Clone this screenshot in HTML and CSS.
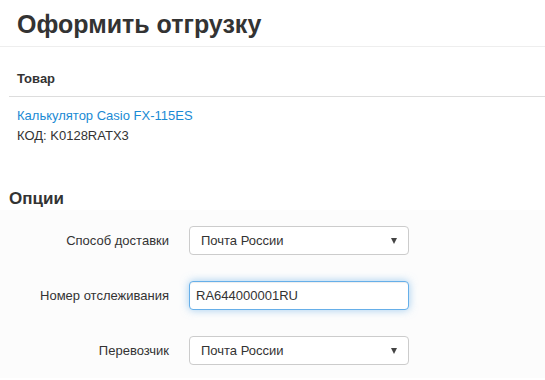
FILE: index.html
```html
<!DOCTYPE html>
<html lang="ru">
<head>
<meta charset="utf-8">
<link rel="stylesheet" href="styles.css">
</head>
<body>
<div class="page-header">
  <h1 class="title">Оформить отгрузку</h1>
</div>
<div class="product">
  <div class="product-head">Товар</div>
  <div class="product-body">
    <a class="product-link" href="#">Калькулятор Casio FX-115ES</a>
    <div class="product-code">КОД: K0128RATX3</div>
  </div>
</div>
<h2 class="section-title">Опции</h2>
<form class="options">
  <div class="row">
    <label class="row-label">Способ доставки</label>
    <div class="control select"><span>Почта России</span><span class="caret"></span></div>
  </div>
  <div class="row">
    <label class="row-label">Номер отслеживания</label>
    <div class="control input focus">RA644000001RU</div>
  </div>
  <div class="row">
    <label class="row-label">Перевозчик</label>
    <div class="control select"><span>Почта России</span><span class="caret"></span></div>
  </div>
</form>
</body>
</html>
```
FILE: styles.css
```css
html, body {
  margin: 0;
  padding: 0;
  background: #fff;
}
body {
  font-family: "Liberation Sans", Arial, sans-serif;
  font-size: 13px;
  color: #333;
}
.page-header {
  border-bottom: 1px solid #eee;
  height: 47px;
  box-sizing: border-box;
  padding: 0 17px;
}
.title {
  margin: 0;
  padding-top: 6px;
  font-size: 25px;
  line-height: 36px;
  font-weight: bold;
  color: #333;
}
.product {
  margin-left: 9px;
}
.product-head {
  font-weight: bold;
  padding: 23px 8px 0 8px;
  height: 50px;
  line-height: 18px;
  box-sizing: border-box;
  border-bottom: 1px solid #ddd;
}
.product-body {
  padding: 9px 8px 0 8px;
  line-height: 20px;
  height: 48px;
  box-sizing: border-box;
}
.product-link {
  color: #1a8ad4;
  text-decoration: none;
  display: block;
}
.section-title {
  margin: 0;
  padding: 44px 9px 0 9px;
  font-size: 17px;
  line-height: 20px;
  font-weight: bold;
  height: 65px;
  box-sizing: border-box;
}
.options {
  background: #fcfcfc;
  padding-top: 16px;
  height: 168px;
  box-sizing: border-box;
  display: flex;
  flex-direction: column;
  gap: 26px;
}
.row {
  display: flex;
  align-items: center;
  height: 29px;
}
.row-label {
  width: 169px;
  text-align: right;
  padding-right: 20px;
  line-height: 18px;
}
.control {
  width: 220px;
  height: 29px;
  box-sizing: border-box;
  border: 1px solid #ccc;
  border-radius: 4px;
  background: #fff;
  display: flex;
  align-items: center;
  color: #333;
}
.select {
  padding: 0 10px 0 11px;
  justify-content: space-between;
}
.caret {
  width: 0;
  height: 0;
  border-left: 3px solid transparent;
  border-right: 3px solid transparent;
  border-top: 6px solid #444;
  margin-right: 1px;
}
.input {
  padding-left: 6px;
}
.focus {
  border-color: #66afe9;
  box-shadow: inset 0 1px 1px rgba(0,0,0,.075), 0 0 8px rgba(102,175,233,.6);
}
```
